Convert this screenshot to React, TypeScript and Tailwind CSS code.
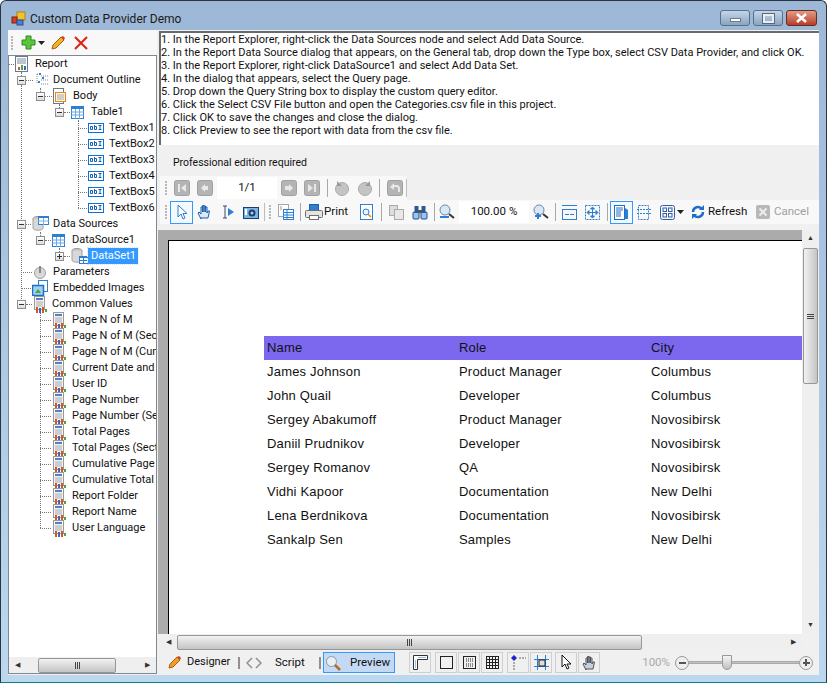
import React from "react"

const ui = "font-['Roboto',sans-serif]"

function Sep({ className }: { className?: string }) {
  return <div className={"w-px h-[18px] bg-[#a8a8a8] shrink-0 " + (className ?? "mx-[3px]")} />
}

function Grip() {
  return (
    <div className="flex flex-col gap-[1px] w-[3px] ml-[3px] mr-[2px] shrink-0">
      <div className="w-[2px] h-[2px] bg-[#b8b8b8]" />
      <div className="w-[2px] h-[2px] bg-[#b8b8b8]" />
      <div className="w-[2px] h-[2px] bg-[#b8b8b8]" />
      <div className="w-[2px] h-[2px] bg-[#b8b8b8]" />
      <div className="w-[2px] h-[2px] bg-[#b8b8b8]" />
    </div>
  )
}

function Box({ active, children }: { active?: boolean; children: React.ReactNode }) {
  return (
    <div className={"w-[23px] h-[23px] flex items-center justify-center shrink-0 " + (active ? "border border-[#3399ff] bg-[#f4f9fe]" : "")}>
      {children}
    </div>
  )
}

function GreyBtn({ d }: { d: string }) {
  return (
    <svg width="16" height="16" viewBox="0 0 16 16">
      <rect x="0.5" y="0.5" width="15" height="15" rx="2" fill="#b4b4b4" stroke="#a0a0a0" />
      <path d={d} fill="#e8e8e8" />
    </svg>
  )
}

function TextBoxIcon() {
  return (
    <svg width="16" height="10" viewBox="0 0 16 10" className="shrink-0">
      <rect x="0.5" y="0.5" width="15" height="9" fill="#fff" stroke="#0a6fd8" />
      <path d="M2.500 3.500h2v3h-2zM6.500 2v4.500h2v-3h-2M10.500 2.500h3M12 2.500v4M10.500 6.500h3" fill="none" stroke="#1b5fae" strokeWidth="1" />
    </svg>
  )
}

function ValueIcon() {
  return (
    <svg width="15" height="17" viewBox="0 0 15 17" className="shrink-0">
      <rect x="1.500" y="0.500" width="10" height="13" fill="#f4f4f4" stroke="#9a9a9a" />
      <rect x="3" y="2" width="7" height="2" fill="#4f81c4" />
      <path d="M3 6h7M3 8h7M3 10h7" stroke="#a8a8a8" />
      <rect x="3" y="11" width="2" height="6" fill="#d2562a" />
      <rect x="6" y="12" width="2" height="5" fill="#3566c0" />
      <rect x="9" y="11" width="2" height="6" fill="#d2562a" />
      <rect x="12" y="13" width="2" height="3" fill="#4aa838" />
    </svg>
  )
}

function ReportIcon() {
  return (
    <svg width="13" height="16" viewBox="0 0 13 16" className="shrink-0">
      <rect x="0.500" y="0.500" width="12" height="15" fill="#fff" stroke="#6a7a8c" />
      <path d="M2 3h9M2 5h9M2 7h9" stroke="#7a8aa0" />
      <rect x="3" y="11" width="2" height="3" fill="#d2562a" />
      <rect x="6" y="9" width="2" height="5" fill="#4aa838" />
      <rect x="9" y="10" width="2" height="4" fill="#3566c0" />
    </svg>
  )
}

function OutlineIcon() {
  return (
    <svg width="16" height="14" viewBox="0 0 16 14" className="shrink-0">
      <path d="M3 1h2M3 1v10M7 3h8M7 7h8M7 11h8" stroke="#7a8a9a" strokeDasharray="1 1" fill="none" />
      <rect x="5" y="0" width="2" height="2" fill="#3a7ad0" />
      <rect x="8" y="4" width="2" height="2" fill="#3a7ad0" />
      <rect x="4" y="8" width="2" height="2" fill="#3a7ad0" />
    </svg>
  )
}

function BodyIcon() {
  return (
    <svg width="13" height="16" viewBox="0 0 13 16" className="shrink-0">
      <rect x="0.500" y="0.500" width="10" height="15" fill="#fff" stroke="#6a7a8c" />
      <rect x="2.500" y="4.500" width="10" height="9" fill="#fff3dc" stroke="#e08a20" />
      <path d="M4 7h7M4 9h7M4 11h7" stroke="#a0a8b4" />
    </svg>
  )
}

function TableIcon() {
  return (
    <svg width="13" height="13" viewBox="0 0 13 13" className="shrink-0">
      <rect x="0.500" y="0.500" width="12" height="12" fill="#fff" stroke="#2f7fd0" />
      <rect x="0" y="0" width="13" height="3" fill="#2f7fd0" />
      <path d="M0 6h13M0 9h13M4.500 3v10M8.500 3v10" stroke="#6aa8e4" />
    </svg>
  )
}

function DbIcon({ small }: { small?: boolean }) {
  return (
    <svg width="18" height="16" viewBox="0 0 18 16" className="shrink-0">
      <ellipse cx="6" cy="3" rx="5" ry="2.500" fill="#c8c8c8" stroke="#9a9a9a" />
      <path d="M1 3v9c0 3 10 3 10 0V3" fill="#d8d8d8" stroke="#a0a0a0" />
      {small ? (
        <g>
          <rect x="8.500" y="8.500" width="9" height="7" fill="#fff" stroke="#2f7fd0" />
          <rect x="8" y="8" width="10" height="2" fill="#2f7fd0" />
          <path d="M8 12.500h10M12.500 10v6" stroke="#2f7fd0" />
        </g>
      ) : (
        <g>
          <rect x="6.500" y="0.500" width="10" height="8" fill="#fff" stroke="#2f7fd0" />
          <rect x="6" y="0" width="11" height="2" fill="#2f7fd0" />
          <path d="M6 5h11M11.500 2v7" stroke="#7ab0e4" />
        </g>
      )}
    </svg>
  )
}

function Minus({ plus }: { plus?: boolean }) {
  return (
    <div className="w-[9px] h-[9px] border border-[#8f8f8f] bg-gradient-to-b from-white to-[#dcdcdc] relative shrink-0">
      <div className="absolute left-[1px] top-[3px] w-[5px] h-px bg-[#333]" />
      {plus && <div className="absolute left-[3px] top-[1px] w-px h-[5px] bg-[#333]" />}
    </div>
  )
}

// one row of the tree, indent is the x of the expander/connector start
function Row({ indent, stub, expander, plus, icon, gap, label, selected }: {
  indent: number
  stub: number
  expander?: boolean
  plus?: boolean
  icon: React.ReactNode
  gap: number
  label: string
  selected?: boolean
}) {
  return (
    <div className="h-4 flex items-center whitespace-nowrap relative" style={{ paddingLeft: indent }}>
      {expander ? <Minus plus={plus} /> : null}
      <div className="border-t border-dotted border-[#777] shrink-0 mr-px" style={{ width: stub }} />
      {icon}
      <span
        className={"text-[11px] leading-4 " + (selected ? "bg-[#3399ff] text-white outline-1 outline-dotted outline-[#cfe6ff] pl-[3px] pr-[2px]" : "text-[#111] px-[2px]")}
        style={{ marginLeft: gap }}
      >
        {label}
      </span>
    </div>
  )
}

const values = [
  "Page N of M", "Page N of M (Section)", "Page N of M (Cumulative)", "Current Date and Time", "User ID",
  "Page Number", "Page Number (Section)", "Total Pages", "Total Pages (Section)", "Cumulative Page Count",
  "Cumulative Total Pages", "Report Folder", "Report Name", "User Language",
]

const people = [
  ["James Johnson", "Product Manager", "Columbus"],
  ["John Quail", "Developer", "Columbus"],
  ["Sergey Abakumoff", "Product Manager", "Novosibirsk"],
  ["Daniil Prudnikov", "Developer", "Novosibirsk"],
  ["Sergey Romanov", "QA", "Novosibirsk"],
  ["Vidhi Kapoor", "Documentation", "New Delhi"],
  ["Lena Berdnikova", "Documentation", "Novosibirsk"],
  ["Sankalp Sen", "Samples", "New Delhi"],
]

const steps = [
  "1. In the Report Explorer, right-click the Data Sources node and select Add Data Source.",
  "2. In the Report Data Source dialog that appears, on the General tab, drop down the Type box, select CSV Data Provider, and click OK.",
  "3. In the Report Explorer, right-click DataSource1 and select Add Data Set.",
  "4. In the dialog that appears, select the Query page.",
  "5. Drop down the Query String box to display the custom query editor.",
  "6. Click the Select CSV File button and open the Categories.csv file in this project.",
  "7. Click OK to save the changes and close the dialog.",
  "8. Click Preview to see the report with data from the csv file.",
]

function Tree() {
  return (
    <div className="flex-1 min-h-0 flex flex-col bg-white border border-[#828790] mb-px">
      <div className="flex-1 min-h-0 relative overflow-hidden">
        {/* dotted tree lines */}
        <div className="absolute left-[12px] top-[16px] h-[8px] border-l border-dotted border-[#777]" />
        <div className="absolute left-[12px] top-[29px] h-[214px] border-l border-dotted border-[#777]" />
        <div className="absolute left-[31px] top-[32px] h-[8px] border-l border-dotted border-[#777]" />
        <div className="absolute left-[50px] top-[48px] h-[4px] border-l border-dotted border-[#777]" />
        <div className="absolute left-[69px] top-[64px] h-[88px] border-l border-dotted border-[#777]" />
        <div className="absolute left-[31px] top-[176px] h-[4px] border-l border-dotted border-[#777]" />
        <div className="absolute left-[50px] top-[192px] h-[4px] border-l border-dotted border-[#777]" />
        <div className="absolute left-[31px] top-[256px] h-[216px] border-l border-dotted border-[#777]" />
        <Row indent={0} stub={5} icon={<ReportIcon />} gap={5} label="Report" />
        <Row indent={8} stub={7} expander icon={<OutlineIcon />} gap={1} label="Document Outline" />
        <Row indent={27} stub={7} expander icon={<BodyIcon />} gap={5} label="Body" />
        <Row indent={46} stub={6} expander icon={<TableIcon />} gap={5} label="Table1" />
        {["TextBox1", "TextBox2", "TextBox3", "TextBox4", "TextBox5", "TextBox6"].map((t) => (
          <Row key={t} indent={69} stub={9} icon={<TextBoxIcon />} gap={3} label={t} />
        ))}
        <Row indent={8} stub={5} expander icon={<DbIcon />} gap={1} label="Data Sources" />
        <Row indent={27} stub={6} expander icon={<TableIcon />} gap={5} label="DataSource1" />
        <Row indent={46} stub={6} expander plus icon={<DbIcon small />} gap={-1} label="DataSet1" selected />
        <Row indent={12} stub={11} icon={<svg width="14" height="14" viewBox="0 0 14 14" className="shrink-0"><circle cx="7" cy="8" r="5.500" fill="#d8d8d8" stroke="#a0a0a0" /><rect x="6" y="1" width="2" height="7" fill="#888" /></svg>} gap={4} label="Parameters" />
        <Row indent={12} stub={10} icon={<svg width="16" height="16" viewBox="0 0 16 16" className="shrink-0"><rect x="6.500" y="0.500" width="9" height="11" fill="#fff" stroke="#2f7fd0" /><rect x="0.500" y="5.500" width="11" height="10" fill="#9fd0f0" stroke="#1f6fc8" strokeWidth="1.500" /><path d="M3 13l3-4 3 4z" fill="#4aa838" /></svg>} gap={3} label="Embedded Images" />
        <Row indent={8} stub={6} expander icon={<ValueIcon />} gap={2} label="Common Values" />
        {values.map((v) => (
          <Row key={v} indent={31} stub={11} icon={<ValueIcon />} gap={3} label={v} />
        ))}
      </div>
      <HScroll thumb="w-[78px] ml-[12px]" />
    </div>
  )
}

function HScroll({ className, thumb }: { className?: string; thumb: string }) {
  return (
    <div className={"h-[16px] bg-[#efefef] flex items-center shrink-0 " + (className ?? "")}>
      <div className="w-[17px] flex justify-center text-[7px] text-[#333] shrink-0">◀</div>
      <div className={"h-[15px] bg-gradient-to-b from-[#f2f2f2] to-[#c4c4c4] border border-[#979797] rounded-[2px] flex items-center justify-center shrink-0 " + thumb}>
        <div className="flex gap-px">
          <div className="w-px h-[7px] bg-[#444]" />
          <div className="w-px h-[7px] bg-[#444]" />
          <div className="w-px h-[7px] bg-[#444]" />
        </div>
      </div>
      <div className="flex-1" />
      <div className="w-[17px] flex justify-center text-[7px] text-[#333] shrink-0">▶</div>
    </div>
  )
}

function ToolbarOne() {
  return (
    <div className="h-[24px] flex items-center pl-[2px] bg-[#f8f8f8] w-[247px] rounded-tr-[3px] shrink-0">
      <Grip />
      <Box><GreyBtn d="M4 4h2v8H4zM12 4v8L7 8z" /></Box>
      <Box><GreyBtn d="M11 6v4H8v2L4 8l4-4v2z" /></Box>
      <div className="w-[60px] h-[22px] bg-white flex items-center justify-center text-[11.500px] text-[#111] ml-[1px] shrink-0">1/1</div>
      <Box><GreyBtn d="M4 6v4h4v2l4-4-4-4v2z" /></Box>
      <Box><GreyBtn d="M4 4v8l5-4zM10 4h2v8h-2z" /></Box>
      <Sep className="ml-[4px] mr-[2px]" />
      <Box><svg width="16" height="16" viewBox="0 0 16 16"><circle cx="8" cy="9" r="6.500" fill="#c4c4c4" stroke="#aaa" /><path d="M3 1v5h5z" fill="#999" /></svg></Box>
      <Box><svg width="16" height="16" viewBox="0 0 16 16"><circle cx="8" cy="9" r="6.500" fill="#c4c4c4" stroke="#aaa" /><path d="M13 1v5H8z" fill="#999" /></svg></Box>
      <Sep />
      <Box><GreyBtn d="M3 7l4-4v2h3c2 0 3 2 3 4v3h-2V9c0-1-.5-2-1.500-2H7v3z" /></Box>
      <div className="flex-1" />
      <div className="w-px h-[18px] bg-[#c0c0c0]" />
    </div>
  )
}

function ToolbarTwo() {
  return (
    <div className="h-[24px] flex items-center pl-[2px] bg-[#f8f8f8] shrink-0">
      <Grip />
      <Box active><svg width="14" height="16" viewBox="0 0 14 16"><path d="M3 1v12l3-3 2 5 2-1-2-4.500h4z" fill="#fff" stroke="#2f7fd0" /></svg></Box>
      <Box><svg width="15" height="16" viewBox="0 0 15 16"><path d="M4 15l-3-6 1-1 2 2V3h1.500v5V1.500H7V8 2h1.500v6V3H10v6l1-2h1.500L11 14H4z" fill="#dce9f8" stroke="#1b5fae" /></svg></Box>
      <Box><svg width="16" height="16" viewBox="0 0 16 16"><path d="M3 2h4M3 14h4M5 2v12" stroke="#30507a" fill="none" /><path d="M8 4l6 4-6 4z" fill="#2f7fd0" /></svg></Box>
      <Box><svg width="16" height="13" viewBox="0 0 16 13"><rect x="0.500" y="1.500" width="15" height="11" fill="#7db4e8" stroke="#1d3e6a" /><circle cx="9" cy="7" r="3.500" fill="#1d3e6a" /><circle cx="9" cy="7" r="1.500" fill="#a8d0f4" /><rect x="2" y="3" width="2" height="6" fill="#fff" /></svg></Box>
      <div className="w-px h-[18px] bg-[#bdbdbd] ml-[2px] mr-[1px] shrink-0" />
      <Grip />
      <Box><svg width="16" height="16" viewBox="0 0 16 16"><rect x="0.500" y="0.500" width="10" height="12" fill="#fff" stroke="#9aa8b8" /><rect x="5.500" y="5.500" width="10" height="10" fill="#fff" stroke="#2f7fd0" /><path d="M5 8.500h11M5 11h11M5 13.500h11M9 6v10" stroke="#2f7fd0" /><path d="M2 3h2M2 5h2" stroke="#e08a20" /></svg></Box>
      <Sep />
      <div className="flex items-center gap-[1px] w-[51px] pl-[1px] shrink-0">
        <svg width="18" height="16" viewBox="0 0 18 16" className="shrink-0"><rect x="4.500" y="0.500" width="9" height="6" fill="#2f7fd0" stroke="#1b5fae" /><rect x="0.500" y="6.500" width="17" height="7" rx="1" fill="#e4e4e4" stroke="#707070" /><rect x="4.500" y="11.500" width="9" height="4" fill="#fff" stroke="#707070" /></svg>
        <span className="text-[11.500px] text-[#111]">Print</span>
      </div>
      <Box><svg width="14" height="16" viewBox="0 0 14 16"><rect x="0.500" y="0.500" width="12" height="15" fill="#fff" stroke="#2f7fd0" /><circle cx="6" cy="8" r="3" fill="#e8f2fc" stroke="#2f7fd0" /><path d="M8 10l3 3" stroke="#e08a20" strokeWidth="1.500" /></svg></Box>
      <Sep />
      <Box><svg width="15" height="15" viewBox="0 0 15 15"><rect x="0.500" y="0.500" width="8" height="10" fill="#ddd" stroke="#aaa" /><rect x="5.500" y="4.500" width="9" height="10" fill="#e8e8e8" stroke="#aaa" /></svg></Box>
      <Box><svg width="16" height="15" viewBox="0 0 16 15"><rect x="1" y="7" width="6" height="7" rx="1" fill="#9cc4ec" stroke="#1b4f8a" /><rect x="9" y="7" width="6" height="7" rx="1" fill="#9cc4ec" stroke="#1b4f8a" /><rect x="2.500" y="1" width="4" height="7" fill="#2a5a94" /><rect x="9.500" y="1" width="4" height="7" fill="#2a5a94" /><rect x="6" y="5" width="4" height="3" fill="#555" /></svg></Box>
      <Sep />
      <div className="w-[21px] flex justify-start shrink-0"><svg width="17" height="16" viewBox="0 0 17 16"><circle cx="7" cy="6" r="5" fill="#d8e8f6" stroke="#6a8aa8" /><rect x="2" y="12" width="9" height="2" fill="#2f7fd0" /><path d="M11 10l5 4" stroke="#333" strokeWidth="2" /></svg></div>
      <div className="w-[70px] h-[22px] bg-white flex items-center justify-center text-[11.500px] text-[#111] shrink-0">100.00 %</div>
      <Box><svg width="17" height="16" viewBox="0 0 17 16"><circle cx="7" cy="6" r="5" fill="#d8e8f6" stroke="#6a8aa8" /><path d="M3 12h6M6 9v6" stroke="#2f7fd0" strokeWidth="2" /><path d="M11 10l5 4" stroke="#333" strokeWidth="2" /></svg></Box>
      <Sep />
      <div className="w-[23px] flex justify-center -ml-[1px] mr-[1px] shrink-0"><svg width="15" height="15" viewBox="0 0 15 15" fill="none" stroke="#2f7fd0"><path d="M0 0.500h15M0 4.500h15M0 14.500h15M0.500 4v11M14.500 4v11M3 9.500h4M8 9.500h4" /></svg></div>
      <div className="w-[23px] flex justify-center -ml-[1px] mr-[1px] shrink-0"><svg width="15" height="15" viewBox="0 0 15 15" fill="none" stroke="#2f7fd0"><rect x="0.500" y="0.500" width="14" height="14" strokeDasharray="2 1" /><path d="M7.500 3v9M3 7.500h9" /><path d="M7.500 2l-2 2h4zM7.500 13l-2-2h4zM2 7.500l2-2v4zM13 7.500l-2-2v4z" fill="#2f7fd0" /></svg></div>
      <Sep className="ml-[2px] mr-[2px]" />
      <Box active><svg width="15" height="15" viewBox="0 0 15 15"><rect x="0.500" y="0.500" width="10" height="14" fill="#fff" stroke="#1f6fc8" /><path d="M2 3h7M2 5h7M2 7h5M2 9h5M2 11h5" stroke="#1f6fc8" /><path d="M11 3l3 2v9h-3z" fill="#2f7fd0" /></svg></Box>
      <div className="w-[20px] flex justify-center shrink-0 ml-[1px]"><svg width="15" height="15" viewBox="0 0 15 15" fill="none" stroke="#2f7fd0"><rect x="1.500" y="0.500" width="10" height="14" strokeDasharray="2 1" /><path d="M0 4.500h15M0 8.500h15" strokeDasharray="2 1" /></svg></div>
      <div className="w-[27px] flex items-center shrink-0 ml-[6px]">
        <svg width="15" height="15" viewBox="0 0 15 15" fill="none" stroke="#2f5fa8" className="shrink-0"><rect x="0.500" y="0.500" width="14" height="14" rx="2" /><rect x="3" y="3" width="3.500" height="3.500" /><rect x="8.500" y="3" width="3.500" height="3.500" /><rect x="3" y="8.500" width="3.500" height="3.500" /><rect x="8.500" y="8.500" width="3.500" height="3.500" /></svg>
        <svg width="7" height="4" viewBox="0 0 7 4" className="ml-[2px] shrink-0"><path d="M0 0h7L3.500 4z" fill="#222" /></svg>
      </div>
      <div className="flex items-center gap-[3px] w-[65px] shrink-0 ml-[4px]">
        <svg width="14" height="14" viewBox="0 0 14 14" fill="none" stroke="#1f6fc8" strokeWidth="2.500" className="shrink-0"><path d="M2 7a5 5 0 0 1 9-3" /><path d="M12 7a5 5 0 0 1-9 3" /><path d="M13 0v5H8z" fill="#1f6fc8" stroke="none" /><path d="M1 14V9h5z" fill="#1f6fc8" stroke="none" /></svg>
        <span className="text-[11.500px] text-[#111]">Refresh</span>
      </div>
      <div className="flex items-center gap-[4px] shrink-0">
        <svg width="14" height="14" viewBox="0 0 14 14" className="shrink-0"><rect width="14" height="14" rx="2" fill="#b8b8b8" /><path d="M3.500 3.500l7 7M10.500 3.500l-7 7" stroke="#eee" strokeWidth="2" /></svg>
        <span className="text-[11.500px] text-[#a0a0a0]">Cancel</span>
      </div>
    </div>
  )
}

function Report() {
  return (
    <div className="flex-1 min-h-0 flex bg-[#ababab] -ml-[2px]">
      <div className="flex-1 min-w-0 pl-[10px] pt-[10px] overflow-hidden">
        <div className="h-full bg-white border-l border-t border-black pl-[95px] pt-[95px]">
          <div className="font-['Liberation_Sans',sans-serif] text-[13px] text-[#111] tracking-[0.2px]">
            <div className="h-6 bg-[#7b68ee] grid grid-cols-[192px_192px_1fr] items-center pl-[3px]">
              <span>Name</span><span>Role</span><span>City</span>
            </div>
            {people.map((p) => (
              <div key={p[0]} className="h-6 grid grid-cols-[192px_192px_1fr] items-center pl-[3px]">
                <span>{p[0]}</span><span>{p[1]}</span><span>{p[2]}</span>
              </div>
            ))}
          </div>
        </div>
      </div>
      <div className="w-[17px] bg-[#efefef] flex flex-col items-center shrink-0">
        <div className="h-[18px] text-[7px] text-[#333] leading-[17px]">▲</div>
        <div className="w-[15px] h-[136px] bg-gradient-to-r from-[#f2f2f2] to-[#c4c4c4] border border-[#979797] rounded-[2px] flex flex-col items-center justify-center gap-px">
          <div className="w-[7px] h-px bg-[#444]" />
          <div className="w-[7px] h-px bg-[#444]" />
          <div className="w-[7px] h-px bg-[#444]" />
        </div>
        <div className="flex-1" />
        <div className="h-[17px] text-[7px] text-[#333] leading-[17px]">▼</div>
      </div>
    </div>
  )
}

function ModeButton({ children }: { children: React.ReactNode }) {
  return <div className="w-[22px] h-[21px] border border-[#cfcfcf] flex items-center justify-center shrink-0">{children}</div>
}

function BottomBar() {
  return (
    <div className="h-[25px] bg-[#f0f0f0] flex items-center pl-[8px] text-[11.500px] text-[#111] shrink-0">
      <svg width="13" height="13" viewBox="0 0 13 13" className="shrink-0"><path d="M1 12l1-4 7-7 3 3-7 7z" fill="#f0a020" stroke="#a86010" /><path d="M9 1l3 3 1-2-2-2z" fill="#d04020" /></svg>
      <span className="ml-[6px] w-[51px] shrink-0 text-[11px]">Designer</span>
      <div className="w-[2px] h-[12px] bg-[#909090] shrink-0" />
      <svg width="16" height="12" viewBox="0 0 16 12" fill="none" stroke="#909090" strokeWidth="1.500" className="ml-[6px] shrink-0"><path d="M6 1L1 6l5 5M10 1l5 5-5 5" /></svg>
      <span className="ml-[13px] w-[44px] shrink-0">Script</span>
      <div className="w-[2px] h-[12px] bg-[#909090] shrink-0" />
      <div className="w-[72px] h-[21px] ml-[2px] border border-[#3399ff] bg-[#c4daf4] flex items-center pl-[1px] shrink-0">
        <svg width="16" height="16" viewBox="0 0 16 16" className="shrink-0"><circle cx="6.500" cy="6.500" r="5" fill="#e8eef4" stroke="#8a9aa8" /><path d="M10 10l5 5" stroke="#b86a20" strokeWidth="2.500" /></svg>
        <span className="ml-[9px]">Preview</span>
      </div>
      <div className="w-[14px] shrink-0" />
      <ModeButton><svg width="15" height="15" viewBox="0 0 15 15" fill="none" stroke="#333"><path d="M0.500 14.500V0.500h14v4h-10v10z" fill="#fff" /><path d="M6 2v1M8 2v1M10 2v1M12 2v1M2 6h1M2 8h1M2 10h1M2 12h1" stroke="#2f7fd0" /></svg></ModeButton>
      <div className="w-[4px] shrink-0" />
      <ModeButton><div className="w-[13px] h-[13px] border border-[#222]" /></ModeButton>
      <div className="w-px shrink-0" />
      <ModeButton><svg width="13" height="13" viewBox="0 0 13 13" fill="none" stroke="#222"><rect x="0.500" y="0.500" width="12" height="12" /><path d="M3 3h7M3 5h7M3 8h7M3 10h7" strokeDasharray="1 1" /></svg></ModeButton>
      <div className="w-px shrink-0" />
      <ModeButton><svg width="13" height="13" viewBox="0 0 13 13" fill="none" stroke="#222"><rect x="0.500" y="0.500" width="12" height="12" /><path d="M0 3.500h13M0 6.500h13M0 9.500h13M3.500 0v13M6.500 0v13M9.500 0v13" /></svg></ModeButton>
      <div className="w-[4px] shrink-0" />
      <ModeButton><svg width="15" height="15" viewBox="0 0 15 15"><path d="M3 0l3 3-3 3-3-3z" fill="#2222cc" /><path d="M8 3h7" stroke="#666" strokeDasharray="2 1" /><path d="M3 7v8" stroke="#666" strokeDasharray="2 1" /></svg></ModeButton>
      <div className="w-px shrink-0" />
      <ModeButton><svg width="15" height="15" viewBox="0 0 15 15" fill="none"><path d="M0 4.500h15M0 11.500h15M3.500 0v15M11.500 0v15" stroke="#2f7fd0" /><rect x="5" y="5" width="6" height="6" fill="#ddd" stroke="#222" /></svg></ModeButton>
      <div className="w-[3px] shrink-0" />
      <ModeButton><svg width="11" height="15" viewBox="0 0 11 15"><path d="M1 0v12l3-3 2 5 2-1-2-4h4z" fill="#fff" stroke="#111" /></svg></ModeButton>
      <div className="w-px shrink-0" />
      <ModeButton><svg width="15" height="16" viewBox="0 0 15 16"><path d="M4 15l-3-6 1-1 2 2V3h1.500v5V1.500H7V8 2h1.500v6V3H10v6l1-2h1.500L11 14H4z" fill="#c4d0e4" stroke="#555" /></svg></ModeButton>
      <div className="flex-1" />
      <span className="text-[#aaa] mr-[5px]">100%</span>
      <div className="w-[14px] h-[14px] rounded-full border border-[#999] bg-[#eee] flex items-center justify-center shrink-0"><div className="w-[7px] h-[2px] bg-[#555]" /></div>
      <div className="w-[110px] h-[15px] flex items-center relative shrink-0">
        <div className="w-full h-[3px] bg-[#c0c0c0] border-y border-[#aaa]" />
        <div className="absolute left-[33px] top-0 w-[10px] h-[15px] bg-gradient-to-b from-[#f4f4f4] to-[#c0c0c0] border border-[#999] rounded-b-[5px]" />
      </div>
      <div className="w-[14px] h-[14px] rounded-full border border-[#999] bg-[#eee] relative shrink-0">
        <div className="absolute left-[2.500px] top-[5px] w-[7px] h-[2px] bg-[#555]" />
        <div className="absolute left-[5px] top-[2.500px] w-[2px] h-[7px] bg-[#555]" />
      </div>
      <div className="w-[6px] shrink-0" />
    </div>
  )
}

export default function App() {
  return (
    <div className={"w-[827px] h-[683px] bg-gradient-to-b from-[#9db8d6] to-[#bcd8f0] border border-[#2c3440] border-b-[#0f7f8f] rounded-t-[6px] flex flex-col overflow-hidden " + ui}>
      <div className="h-[29px] flex items-center pl-[10px] pt-[6px] shrink-0 relative">
        <svg width="16" height="16" viewBox="0 0 16 16" className="shrink-0">
          <rect x="6" y="1" width="8" height="8" fill="#f2c230" stroke="#b08010" />
          <rect x="1" y="6" width="5" height="6" fill="#d04020" stroke="#802010" />
          <rect x="6" y="9" width="6" height="5" fill="#4a80d0" stroke="#2a5090" />
        </svg>
        <span className="ml-[3px] text-[12px] text-[#1a1a1a]">Custom Data Provider Demo</span>
        <div className="absolute right-[9px] top-[9px] flex gap-[3px]">
          <div className="w-[30px] h-[16px] rounded-[3px] border border-[#5a7088] bg-gradient-to-b from-[#c4d6ea] to-[#8aa4c0] flex items-center justify-center"><div className="w-[11px] h-[4px] bg-white border border-[#6a7a8a] mt-[4px]" /></div>
          <div className="w-[30px] h-[16px] rounded-[3px] border border-[#5a7088] bg-gradient-to-b from-[#c4d6ea] to-[#8aa4c0] flex items-center justify-center"><div className="w-[11px] h-[9px] border-2 border-[#e8eef4] outline-1 outline-[#5a6a7a]" /></div>
          <div className="w-[31px] h-[16px] rounded-[3px] border border-[#6a2a20] bg-gradient-to-b from-[#e09a88] to-[#b83a28] flex items-center justify-center">
            <svg width="13" height="10" viewBox="0 0 13 10"><path d="M2 1l9 8M11 1L2 9" stroke="#fff" strokeWidth="2.500" /></svg>
          </div>
        </div>
      </div>
      <div className="flex-1 min-h-0 mx-[7px] mb-[7px] flex bg-[#f0f0f0]">
        <div className="w-[149px] shrink-0 flex flex-col">
          <div className="h-[25px] flex items-center bg-[#f8f8f8] shrink-0">
            <Grip />
            <svg width="15" height="15" viewBox="0 0 15 15" className="ml-[5px] shrink-0"><path d="M5 1h5v4h4v5h-4v4H5v-4H1V5h4z" fill="#5ac43c" stroke="#2e8a1c" /></svg>
            <svg width="7" height="4" viewBox="0 0 7 4" className="ml-[2px] shrink-0"><path d="M0 0h7L3.500 4z" fill="#222" /></svg>
            <svg width="15" height="15" viewBox="0 0 15 15" className="ml-[6px] shrink-0"><path d="M1 14l1-4 8-8 3 3-8 8z" fill="#f0b030" stroke="#a86010" /><path d="M10 2l3 3 1-2-2-2z" fill="#d04020" /></svg>
            <svg width="14" height="14" viewBox="0 0 14 14" className="ml-[8px] shrink-0"><path d="M1 1l12 12M13 1L1 13" stroke="#e02010" strokeWidth="2" /></svg>
          </div>
          <Tree />
        </div>
        <div className="w-[3px] shrink-0" />
        <div className="flex-1 min-w-0 flex flex-col">
          <div className="h-[114px] mt-px -ml-px shrink-0 bg-white border-l-2 border-t-2 border-[#6a6a6a] text-[11px] leading-[13px] text-[#111] whitespace-nowrap overflow-hidden">
            {steps.map((s) => <div key={s}>{s}</div>)}
          </div>
          <div className="h-[31px] shrink-0 flex items-center pl-[13px] pt-[5px] text-[10.500px] text-[#111]">Professional edition required</div>
          <ToolbarOne />
          <ToolbarTwo />
          <div className="h-[6px] shrink-0" />
          <Report />
          <HScroll thumb="w-[465px]" className="mr-[17px]" />
          <BottomBar />
        </div>
      </div>
    </div>
  )
}
